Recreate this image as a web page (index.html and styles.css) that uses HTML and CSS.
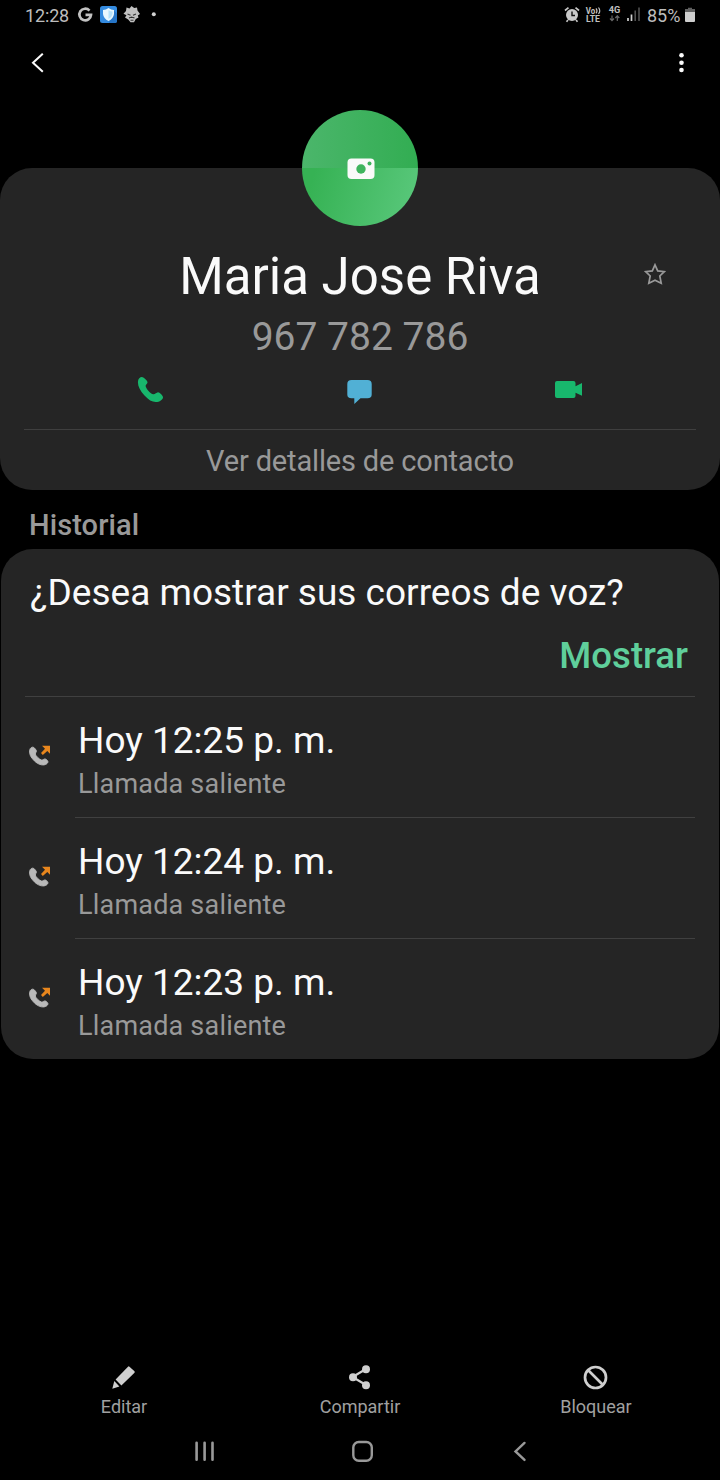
FILE: index.html
```html
<!DOCTYPE html>
<html lang="es">
<head>
<meta charset="utf-8">
<title>Contacto</title>
<link rel="stylesheet" href="styles.css">
</head>
<body>
<svg class="defs" aria-hidden="true">
  <symbol id="outgoing" viewBox="0 0 24 24">
    <path fill="#b9b9b9" stroke="#b9b9b9" stroke-width=".9" d="M5.300 4.300C4 3.700 2.300 4.800 1.800 6.700C1 10 2 13 5.100 16.500C8.500 20.500 12.500 22.300 16 21.900C18 21.600 19.600 20.500 20 19C20.200 18 18 15.900 17 15.900C15.800 15.900 14.600 17.300 13.400 17C11.400 16.500 7.600 12.800 7.300 11C7.200 9.800 8.500 9.300 8.400 8C8.300 7 6.500 4.700 5.300 4.300Z"/>
    <path fill="#e8861d" d="M14 2.800H22V10.800L19.300 8.100L14.800 12L13 10.100L17 5.700Z"/>
  </symbol>
</svg>
<main class="screen">
  <div class="status">
    <span class="clock">12:28</span>
    <svg class="status-left" width="82" height="22" viewBox="77 4 82 22">
      <path d="M89.500 10.600A5.800 5.800 0 1 0 91 14.900H85.500" fill="none" stroke="#c2c2c2" stroke-width="2.700"/>
      <rect x="100" y="6" width="17" height="17" rx="2.500" fill="#348be0"/>
      <path d="M113 9.500L117 13.500V20.500Q117 23 114.500 23H109Z" fill="#2675c7"/>
      <path d="M108.500 8Q111 10 114 10V14Q113.500 18.500 108.500 21Q103.500 18.500 103 14V10Q106 10 108.500 8Z" fill="#e9f8ff"/>
      <path d="M108.500 10Q110.500 11.500 112.500 11.500V14Q112 17 108.500 19Z" fill="#b6e1fa"/>
      <path d="M131.500 6L134.200 8L137 7.500L137.500 10.600L140 14L137.800 15.500L138.500 17.500L135.800 19L134 22.300H130.500L128.200 19.500L125 17.500L126.500 15.300L123.500 13.700L126 11L126.500 7.500L129.500 8.500Z" fill="#c0c0c0"/>
      <path d="M127.500 14L130.500 15.300M136 14L133 15.300M129 18L131.500 17L134.500 18M130.500 20.300H133.500" stroke="#333" stroke-width="1.100"/>
      <circle cx="153.800" cy="14.300" r="2" fill="#d0d0d0"/>
    </svg>
    <svg class="status-right" width="76" height="22" viewBox="564 4 76 22">
      <circle cx="572" cy="15" r="6" fill="#c8c8c8"/>
      <path d="M565 10.500L568.500 7.700M579 10.500L575.500 7.700M568 20L566.500 21.700M576 20L577.500 21.700" stroke="#c8c8c8" stroke-width="1.700"/>
      <path d="M572 11.500V15.500H575" fill="none" stroke="#111" stroke-width="1.400"/>
      <g fill="#c0c0c0" class="tiny">
        <text x="585.700" y="13.700" textLength="9.500" lengthAdjust="spacingAndGlyphs">Vo</text>
        <text x="586" y="22.300" textLength="14" lengthAdjust="spacingAndGlyphs">LTE</text>
        <text x="608.700" y="13.300" textLength="11.500" lengthAdjust="spacingAndGlyphs">4G</text>
      </g>
      <path d="M596 8.300Q598 10.800 596 13.300M598.500 7.500Q601 10.800 598.500 14" fill="none" stroke="#c0c0c0" stroke-width="1.200"/>
      <path d="M612 15.500V20.500M610 18.500L612 20.700L614 18.500M617.300 21V16M615.300 18L617.300 15.800L619.300 18" fill="none" stroke="#686868" stroke-width="1.200"/>
      <path d="M628 18V21M631.500 14.500V21" stroke="#d0d0d0" stroke-width="1.700"/>
      <path d="M635.200 10.500V21M639 7.500V21" stroke="#555" stroke-width="1.500"/>
    </svg>
    <span class="percent">85%</span>
    <svg class="battery" width="10" height="16" viewBox="0 0 10 16"><path fill="#606060" d="M0 2H3V.7H7V2H10V5H0Z"/><path fill="#cecece" d="M0 5H10V14Q10 15 9 15H1Q0 15 0 14Z"/></svg>
  </div>

  <header class="topbar">
    <svg width="14" height="20" viewBox="0 0 14 20"><path d="M11.800 .7L2 9.700L11.800 18.700" fill="none" stroke="#fafafa" stroke-width="2"/></svg>
    <svg width="6" height="20" viewBox="0 0 6 20" fill="#fafafa"><circle cx="3.500" cy="2.300" r="2.300"/><circle cx="3.500" cy="9.700" r="2.300"/><circle cx="3.500" cy="17" r="2.300"/></svg>
  </header>

  <section class="contact">
    <div class="avatar">
      <svg width="28" height="22" viewBox="0 0 28 22"><rect x=".5" y=".5" width="27" height="20.500" rx="4" fill="#fafafa"/><circle cx="14" cy="11" r="4.700" fill="#3fb45e"/><circle cx="22.500" cy="5.600" r="2" fill="#3fb45e"/></svg>
    </div>
    <div class="name-row">
      <h1 class="name">Maria Jose Riva</h1>
      <svg class="star" width="22" height="22" viewBox="0 0 22 22"><path d="M11 1.800L13.700 7.900L20.300 8.600L15.800 13L17.200 20.200L11 17.300L4.800 20.200L6.200 13L1.700 8.600L8.300 7.900Z" fill="none" stroke="#999" stroke-width="1.700"/></svg>
    </div>
    <div class="number">967 782 786</div>
    <div class="actions">
      <svg width="28" height="28" viewBox="0 0 28 28"><path fill="#18b76d" d="M6.500 1.200C4.800.6 2 2.500 1.900 6C1.800 10.500 4.500 15 8.500 19.500C12.500 24 16.200 26.100 20 26C23.500 26 27 23.700 27 21.200C27 19.600 23.300 16.100 22 16.300C20.500 16.500 19 18.500 17.200 18.300C14.700 18 9.900 12.500 9.600 10C9.500 8.500 11.300 8 11.500 6.400C11.600 4.800 8.300 1.700 6.500 1.200Z"/></svg>
      <svg width="28" height="28" viewBox="0 0 28 28"><path fill="#51b0d5" d="M6.500 4H22.500Q26.700 4 26.700 8V18.500Q26.700 22.300 22.500 22.300H15.500L9.300 28V22.300H6.500Q2.300 22.300 2.300 18.500V8Q2.300 4 6.500 4Z"/></svg>
      <svg width="28" height="28" viewBox="0 0 28 28"><path fill="#18b76d" d="M3 5H19.500Q21.500 5 21.500 7V10.300L28 7V19.800L21.500 16.700V20Q21.500 22 19.500 22H3Q1 22 1 20V7Q1 5 3 5Z"/></svg>
    </div>
    <div class="details">Ver detalles de contacto</div>
  </section>

  <h2 class="heading">Historial</h2>

  <section class="history">
    <div class="voicemail">
      <p class="question">¿Desea mostrar sus correos de voz?</p>
      <div class="show">Mostrar</div>
    </div>
    <div class="call">
      <svg class="call-icon" width="24" height="24"><use href="#outgoing"/></svg>
      <div class="call-text"><div class="time">Hoy 12:25 p. m.</div><div class="kind">Llamada saliente</div></div>
    </div>
    <div class="call">
      <svg class="call-icon" width="24" height="24"><use href="#outgoing"/></svg>
      <div class="call-text"><div class="time">Hoy 12:24 p. m.</div><div class="kind">Llamada saliente</div></div>
    </div>
    <div class="call">
      <svg class="call-icon" width="24" height="24"><use href="#outgoing"/></svg>
      <div class="call-text"><div class="time">Hoy 12:23 p. m.</div><div class="kind">Llamada saliente</div></div>
    </div>
  </section>

  <footer class="toolbar">
    <div class="tool">
      <svg width="26" height="26" viewBox="0 0 26 26"><path fill="#cfcfcf" d="M17 2.700Q17.700 2 18.500 2.700L23.500 7.300Q24 8 23.500 8.800L10.400 21.500L4.600 15.400ZM3.300 17L8.400 22.400L1.300 24.700Z"/></svg>
      <span>Editar</span>
    </div>
    <div class="tool">
      <svg width="26" height="26" viewBox="0 0 26 26"><path d="M19 5L5.500 13L19 21" fill="none" stroke="#cfcfcf" stroke-width="2.200"/><g fill="#cfcfcf"><circle cx="19" cy="5.200" r="4"/><circle cx="6" cy="13.200" r="4"/><circle cx="19" cy="21.300" r="4"/></g></svg>
      <span>Compartir</span>
    </div>
    <div class="tool">
      <svg width="26" height="26" viewBox="0 0 26 26"><g fill="none" stroke="#cfcfcf" stroke-width="2.700"><circle cx="12.500" cy="13.500" r="10.500"/><path d="M5 6L20 21"/></g></svg>
      <span>Bloquear</span>
    </div>
  </footer>
  <nav class="nav">
    <svg width="20" height="22" viewBox="0 0 20 22"><path d="M1.600 2.700V19.700M9.600 2.700V19.700M17.500 2.700V19.700" stroke="#999" stroke-width="2.600" stroke-linecap="round"/></svg>
    <svg class="home" width="22" height="22" viewBox="0 0 22 22"><rect x="1.300" y="2" width="18.500" height="18.700" rx="5.500" fill="none" stroke="#999" stroke-width="2.400"/></svg>
    <svg width="14" height="22" viewBox="0 0 14 22"><path d="M11.500 2.900L2.500 11.400L11.500 19.900" fill="none" stroke="#999" stroke-width="2.400" stroke-linecap="round"/></svg>
  </nav>
</main>
</body>
</html>
```
FILE: styles.css
```css
* { box-sizing: border-box; }
body { margin: 0; background: #000; font-family: Roboto, sans-serif; color: #fafafa; }
h1, h2, p { margin: 0; font-weight: 400; }
svg { display: block; flex: none; }
.defs { width: 0; height: 0; position: absolute; }
.screen { width: 720px; height: 1480px; overflow: hidden; display: flex; flex-direction: column; white-space: nowrap; }
.status { height: 30px; flex: none; padding: 0 25px 0; display: flex; align-items: center; color: #bdbdbd; font-size: 18px; line-height: 31px; }
.clock { width: 52px; letter-spacing: -.15px; }
.status-right { margin-left: auto; margin-right: 7px; }
.percent { width: 38px; }
.tiny { font-size: 8.500px; font-weight: 700; }
.topbar { height: 66px; flex: none; padding: 0 36px 0 31px; display: flex; justify-content: space-between; align-items: center; }
.contact { height: 322px; flex: none; margin-top: 72px; background: #252525; border-radius: 32px; display: flex; flex-direction: column; align-items: center; }
.avatar { width: 116px; height: 116px; flex: none; margin-top: -58px; padding: 1px 0 0 1px; border-radius: 50%; display: flex; align-items: center; justify-content: center; background: linear-gradient(90deg, #4bb66b, #32ad52) 0 0 / 100% 50% no-repeat, linear-gradient(105deg, #36b254 10%, #5bc97d) 0 100% / 100% 50% no-repeat; }
.name-row { width: 100%; height: 60px; flex: none; margin-top: 21px; padding: 0 54px; display: grid; grid-template-columns: 22px 1fr 22px; align-items: center; }
.name { grid-column: 2; text-align: center; font-size: 51px; line-height: 60px; }
.star { margin-top: -6px; }
.number { height: 50px; line-height: 50px; margin-top: 5px; font-size: 39px; color: #999; }
.actions { width: 100%; height: 67px; padding: 14px 138px 0 136px; display: flex; justify-content: space-between; }
.details { width: 672px; height: 61px; border-top: 1px solid #3f3f3f; text-align: center; font-size: 29px; letter-spacing: -.16px; line-height: 63px; color: #999; }
.heading { height: 59px; flex: none; padding-left: 29px; font-size: 29px; letter-spacing: .1px; line-height: 71px; font-weight: 500; color: #999; }
.history { height: 510px; flex: none; margin: 0 1px; padding: 0 24px; background: #252525; border-radius: 32px; }
.voicemail { height: 148px; padding: 19px 7px 0 5px; border-bottom: 1px solid #404040; }
.question { font-size: 37px; line-height: 50px; }
.show { margin-top: 13px; text-align: right; font-size: 36.600px; line-height: 50px; font-weight: 500; color: #5fcf9b; }
.call { height: 121px; display: flex; }
.call-icon { margin: 46px 23px 0 3px; }
.call-text { flex: 1; padding: 20px 0 0 3px; border-bottom: 1px solid #404040; }
.call:last-child .call-text { border-bottom: 0; }
.time { font-size: 37px; line-height: 48px; }
.kind { font-size: 27px; letter-spacing: .2px; line-height: 38px; color: #999; }
.toolbar { margin-top: 305px; height: 60px; flex: none; padding: 0 6px; display: grid; grid-template-columns: repeat(3, 1fr); }
.tool { display: flex; flex-direction: column; align-items: center; font-size: 18px; line-height: 34px; color: #a0a0a0; }
.nav { height: 56px; flex: none; padding: 16px 193px 0 195px; display: flex; justify-content: space-between; }
.home { margin-left: -2px; }
```
